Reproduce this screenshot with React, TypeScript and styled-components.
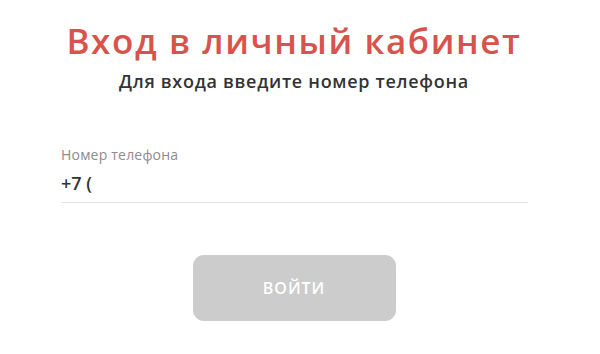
import React from 'react';
import styled, { createGlobalStyle } from 'styled-components';

const GlobalStyle = createGlobalStyle`
  html, body {
    margin: 0;
    padding: 0;
    background: #fff;
  }
  body {
    font-family: "Open Sans", "Noto Sans", Arial, sans-serif;
  }
`;

const Page = styled.div`
  width: 588px;
  display: flex;
  flex-direction: column;
  align-items: center;
  padding-top: 18px;
`;

const Title = styled.h1`
  margin: 0;
  font-size: 35px;
  line-height: 46px;
  font-weight: 600;
  letter-spacing: 1.6px;
  color: #d8534b;
`;

const Subtitle = styled.p`
  margin: 5px 0 0;
  font-size: 18px;
  line-height: 24px;
  font-weight: 600;
  letter-spacing: 0.7px;
  color: #333;
`;

const Field = styled.label`
  align-self: stretch;
  margin: 53px 60px 0 61px;
  display: flex;
  flex-direction: column;
  border-bottom: 1px solid #e2e2e2;
`;

const FieldLabel = styled.span`
  font-size: 14px;
  line-height: 18px;
  letter-spacing: 0.2px;
  color: #8c8c8c;
`;

const FieldInput = styled.input`
  border: none;
  outline: none;
  padding: 0;
  margin: 7px 0 7px;
  font-family: inherit;
  font-size: 18px;
  line-height: 24px;
  font-weight: 600;
  color: #333;
  background: transparent;
`;

const SubmitButton = styled.button`
  margin-top: 52px;
  width: 203px;
  height: 66px;
  border: none;
  border-radius: 11px;
  background: #cccccc;
  color: #fff;
  font-family: inherit;
  font-size: 16px;
  font-weight: 600;
  letter-spacing: 1px;
  cursor: default;
`;

export default function App() {
  return (
    <>
      <GlobalStyle />
      <Page>
        <Title>Вход в личный кабинет</Title>
        <Subtitle>Для входа введите номер телефона</Subtitle>
        <Field>
          <FieldLabel>Номер телефона</FieldLabel>
          <FieldInput defaultValue="+7 (" />
        </Field>
        <SubmitButton disabled>ВОЙТИ</SubmitButton>
      </Page>
    </>
  );
}
